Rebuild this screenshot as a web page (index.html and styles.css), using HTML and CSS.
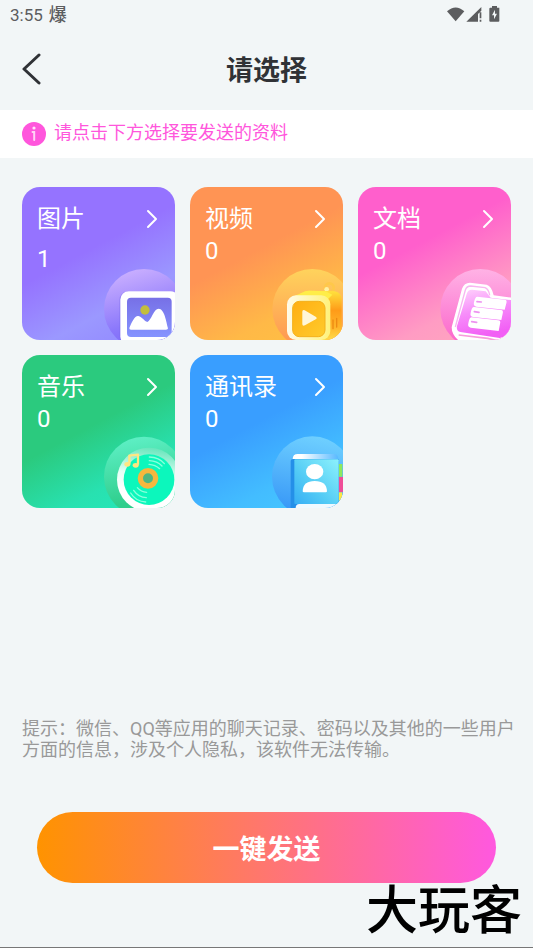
FILE: index.html
```html
<!DOCTYPE html>
<html lang="zh-CN">
<head>
  <meta charset="UTF-8" />
  <meta name="viewport" content="width=device-width, initial-scale=1.0" />
  <title>请选择</title>
  <link rel="stylesheet" href="styles.css">
</head>
<body>

  <div class="status">
    <span class="time">3:55</span>
    <span class="badge">爆</span>
    <svg class="status-icons" width="54" height="18" viewBox="0 0 162 54" fill="#5c5d5f">
      <path d="M0 16 Q26 -7 52 16 L26 46 Z" />
      <path d="M58 47 L103 3 V14 L93 24 V47 Z M98 19 H103 V37 H98 Z M98 41 H103 V47 H98 Z" />
      <path d="M130 5 H135 V0 H150 V5 H157 V45 Q157 47 154 47 H130 Q127 47 127 45 V8 Q127 5 130 5 Z" />
      <path d="M144 11 L135 28 H141 V40 L150 23 H144 Z" fill="#f2f6f7" />
    </svg>
  </div>

  <header class="header">
    <button class="back" aria-label="返回">
      <svg width="20" height="34" viewBox="0 0 20 34" fill="none" stroke="#303236" stroke-width="3" stroke-linecap="round" stroke-linejoin="round"><path d="M17 2 L2 16 L17 30" /></svg>
    </button>
    <h1>请选择</h1>
  </header>

  <div class="notice">
    <svg width="24" height="24" viewBox="0 0 24 24">
      <circle cx="12" cy="12" r="12" fill="#ff56dc" />
      <circle cx="12" cy="6" r="1.6" fill="#ffe3f9" />
      <path d="M10.5 10 H12.2 V18" fill="none" stroke="#ffd3f5" stroke-width="2" stroke-linecap="round" />
    </svg>
    <span>请点击下方选择要发送的资料</span>
  </div>

  <main class="cards">
    <button class="card image">
      <span class="card-head">图片 <svg class="arrow" viewBox="0 0 12 20"><path d="M2 2 L10 10 L2 18" /></svg></span>
      <span class="count">1</span>
      <svg class="art" viewBox="264 264 216 216">
        <defs>
          <linearGradient id="img-bg" x1="0.3" y1="0" x2="0.6" y2="1"><stop offset="0" stop-color="#cbb0ff" /><stop offset="0.65" stop-color="#8b78fb" /><stop offset="1" stop-color="#7566f5" /></linearGradient>
          <linearGradient id="img-in" x1="0" y1="0" x2="0" y2="1"><stop offset="0" stop-color="#7770e6" /><stop offset="1" stop-color="#8593ff" /></linearGradient>
        </defs>
        <circle cx="387" cy="387" r="120" fill="url(#img-bg)" />
        <rect x="313" y="333" width="180" height="160" rx="27" fill="#7566e8" opacity="0.4" />
        <rect x="316" y="334" width="176" height="160" rx="25" fill="#fff" />
        <rect x="336" y="353" width="134" height="118" rx="12" fill="url(#img-in)" />
        <circle cx="390" cy="390" r="14" fill="#c3be3c" />
        <path d="M343 444 C350 426 360 406 370 408 C382 411 388 424 397 426 C409 421 416 386 431 386 C448 386 454 425 459 445 Q459 449 453 449 H348 Q342 449 343 444 Z" fill="#fff" />
      </svg>
    </button>

    <button class="card video">
      <span class="card-head">视频 <svg class="arrow" viewBox="0 0 12 20"><path d="M2 2 L10 10 L2 18" /></svg></span>
      <span class="count">0</span>
      <svg class="art" viewBox="264 264 216 216">
        <defs>
          <linearGradient id="vid-bg" x1="0.4" y1="0" x2="0.4" y2="1"><stop offset="0" stop-color="#ffd35c" /><stop offset="1" stop-color="#ff9252" /></linearGradient>
          <linearGradient id="vid-side" x1="0" y1="0" x2="0" y2="1"><stop offset="0" stop-color="#ffe33e" /><stop offset="0.4" stop-color="#ff9b18" /><stop offset="0.75" stop-color="#ffb52a" /><stop offset="1" stop-color="#ffdc4c" /></linearGradient>
          <linearGradient id="vid-front" x1="0" y1="0" x2="1" y2="0"><stop offset="0" stop-color="#fffbea" /><stop offset="1" stop-color="#fff27a" /></linearGradient>
          <linearGradient id="vid-in" x1="0" y1="0" x2="1" y2="1"><stop offset="0" stop-color="#ffae12" /><stop offset="1" stop-color="#ffcb2c" /></linearGradient>
        </defs>
        <circle cx="388" cy="387" r="120" fill="url(#vid-bg)" />
        <circle cx="439" cy="323" r="13" fill="none" stroke="#ffc84a" stroke-width="8" />
        <circle cx="431" cy="328" r="7" fill="#fff1a3" />
        <path d="M335 349 L367 334 Q371 332 379 332 L455 334 Q476 337 476 361 V480 H400 Z" fill="url(#vid-side)" />
        <path d="M326 352 L367 334 Q371 332 379 332 L428 334 L448 344 L430 362 Z" fill="#ffed48" />
        <rect x="312" y="346" width="130" height="134" rx="27" fill="url(#vid-front)" />
        <rect x="329" y="364" width="97" height="106" rx="20" fill="url(#vid-in)" stroke="#f3b01c" stroke-width="3" />
        <path d="M358 395 Q358 388 365 391 L398 410 Q404 414 398 418 L366 436 Q358 440 358 432 Z" fill="#fff6d9" />
        <path d="M450 420 V446 M461 415 V441" stroke="#ed8a12" stroke-width="4" stroke-linecap="round" />
      </svg>
    </button>

    <button class="card document">
      <span class="card-head">文档 <svg class="arrow" viewBox="0 0 12 20"><path d="M2 2 L10 10 L2 18" /></svg></span>
      <span class="count">0</span>
      <svg class="art" viewBox="264 264 216 216">
        <defs>
          <linearGradient id="doc-bg" x1="0.4" y1="0" x2="0.4" y2="1"><stop offset="0" stop-color="#ffb2e5" /><stop offset="1" stop-color="#fb60c9" /></linearGradient>
          <linearGradient id="doc-in" x1="0" y1="0" x2="0.3" y2="1"><stop offset="0" stop-color="#ffd5fc" /><stop offset="0.5" stop-color="#f78dfa" /><stop offset="1" stop-color="#f25ff5" /></linearGradient>
        </defs>
        <circle cx="388" cy="387" r="120" fill="url(#doc-bg)" />
        <path d="M302 442 L333 326 Q339 308 357 308 L407 314 Q422 318 428 346 L490 354 V484 H326 Q302 466 302 442 Z" fill="#fff" />
        <path d="M313 441 L343 330 Q347 318 359 318 L402 323 Q413 327 416 346" fill="none" stroke="#f8b6f1" stroke-width="4" />
        <path d="M318 438 L347 342 Q350 329 363 329 L404 334 L419 353 L488 361 V462 L446 474 L328 456 Q315 452 318 438 Z" fill="url(#doc-in)" />
        <path d="M379 350 L461 359 Q469 360 466 370 L461 389 L376 380 Q366 378 369 367 Q372 350 379 350 Z" fill="#fff" />
        <path d="M369 381 L450 390 Q458 391 455 401 L451 420 L366 411 Q356 409 359 398 Q362 381 369 381 Z" fill="#fff" />
        <path d="M361 412 L442 421 Q450 422 447 432 L443 453 L359 443 Q349 441 352 430 Q355 412 361 412 Z" fill="#fff" />
        <path d="M378 365 L391 366 M370 395 L384 397 M362 425 L377 427" stroke="#ed92f0" stroke-width="5" stroke-linecap="round" />
        <path d="M323 465 L410 475 L438 482" fill="none" stroke="#f89bdc" stroke-width="5" />
      </svg>
    </button>

    <button class="card music">
      <span class="card-head">音乐 <svg class="arrow" viewBox="0 0 12 20"><path d="M2 2 L10 10 L2 18" /></svg></span>
      <span class="count">0</span>
      <svg class="art" viewBox="264 264 216 216">
        <defs>
          <linearGradient id="mus-bg" x1="0.3" y1="0" x2="0.5" y2="1"><stop offset="0" stop-color="#5ff0c6" /><stop offset="0.8" stop-color="#2fce8c" /></linearGradient>
          <linearGradient id="mus-ring" x1="0.5" y1="0" x2="0.4" y2="0.7"><stop offset="0" stop-color="#69e6bd" /><stop offset="0.6" stop-color="#e4fff5" /><stop offset="1" stop-color="#fff" /></linearGradient>
        </defs>
        <circle cx="387" cy="386" r="120" fill="url(#mus-bg)" />
        <circle cx="402" cy="395" r="96" fill="url(#mus-ring)" />
        <circle cx="402" cy="395" r="76" fill="#0cf7bc" />
        <circle cx="399" cy="391" r="23" fill="#4fb681" stroke="#f6b73e" stroke-width="16" />
        <g fill="none" stroke="#8affdc" stroke-width="4" stroke-linecap="round">
          <path d="M403 327 Q433 328 448 347 M403 338 Q427 339 441 354 M402 349 Q421 350 434 362" />
          <path d="M347 435 Q363 461 392 462 M356 427 Q370 448 394 449 M367 419 Q378 432 395 433" />
        </g>
        <path d="M343 348 V323 L369 320 V350" fill="none" stroke="#ffe682" stroke-width="7" stroke-linejoin="round" />
        <ellipse cx="337" cy="349" rx="9" ry="7" fill="#ffe682" />
        <ellipse cx="362" cy="352" rx="9" ry="7" fill="#ffe682" />
      </svg>
    </button>

    <button class="card contacts">
      <span class="card-head">通讯录 <svg class="arrow" viewBox="0 0 12 20"><path d="M2 2 L10 10 L2 18" /></svg></span>
      <span class="count">0</span>
      <svg class="art" viewBox="264 264 216 216">
        <defs>
          <linearGradient id="con-bg" x1="0.6" y1="0" x2="0.4" y2="1"><stop offset="0" stop-color="#6fd0ff" /><stop offset="1" stop-color="#3595f7" /></linearGradient>
          <linearGradient id="con-page" x1="0" y1="0" x2="1" y2="0"><stop offset="0.2" stop-color="#fff" /><stop offset="1" stop-color="#58b9ff" /></linearGradient>
          <linearGradient id="con-in" x1="1" y1="0" x2="0" y2="1"><stop offset="0" stop-color="#8cf1fc" /><stop offset="0.6" stop-color="#53cbf5" /><stop offset="1" stop-color="#36aef5" /></linearGradient>
        </defs>
        <circle cx="388" cy="386" r="121" fill="url(#con-bg)" />
        <path d="M329 334 Q329 318 344 318 H452 Q466 318 466 334 Z" fill="url(#con-page)" />
        <rect x="466" y="348" width="12" height="38" fill="#8ee95c" />
        <rect x="466" y="387" width="14" height="45" fill="#ef4d98" />
        <rect x="466" y="433" width="12" height="25" fill="#ffe642" />
        <path d="M323 340 Q323 333 332 333 H467 V468 H345 Q338 468 338 480 H323 Z" fill="#248fe8" />
        <rect x="334" y="334" width="133" height="134" rx="3" fill="url(#con-in)" />
        <path d="M338 480 Q338 468 350 468 H467 L481 456 V480 Z" fill="#eff9ff" />
        <ellipse cx="395" cy="371" rx="26" ry="23" fill="#fff" />
        <path d="M359 430 Q360 399 395 399 Q431 399 432 430 Q432 433 428 433 H363 Q359 433 359 430 Z" fill="#fff" />
      </svg>
    </button>
  </main>

  <footer class="footer">
    <p class="tip">提示：微信、QQ等应用的聊天记录、密码以及其他的一些用户方面的信息，涉及个人隐私，该软件无法传输。</p>
    <button class="send">一键发送</button>
  </footer>

  <div class="watermark">大玩客</div>

</body>
</html>
```
FILE: styles.css
```css
* { box-sizing: border-box; }
body { margin: 0; min-height: 100vh; display: flex; flex-direction: column; position: relative; background: #f2f6f7; border-bottom: 1px solid #777; font-family: Roboto, "Noto Sans CJK SC", sans-serif; color: #303236; }
button { padding: 0; border: none; background: none; font-family: inherit; color: inherit; cursor: pointer; }
svg { display: block; flex: none; }

.status { display: flex; align-items: center; height: 30px; padding: 0 32px 0 10px; font-size: 17px; line-height: 24px; color: #5c5d5f; }
.badge { margin-left: 6px; font-size: 18px; font-weight: 500; }
.status-icons { margin-left: auto; }

.header { display: grid; grid-template-columns: 20px 1fr 20px; align-items: center; height: 80px; padding: 0 22px; }
.header h1 { margin: 0; padding-top: 2px; font-size: 27px; line-height: 40px; text-align: center; }

.notice { display: flex; align-items: center; gap: 8px; height: 48px; padding: 0 22px; background: #fff; color: #ff56dc; font-size: 18px; line-height: 24px; }
.notice span { padding-bottom: 2px; }

.cards { display: grid; grid-template-columns: repeat(3, 1fr); gap: 15px; padding: 29px 22px; }
.card { position: relative; display: flex; flex-direction: column; aspect-ratio: 1; padding: 16px 15px; border-radius: 18px; overflow: hidden; color: #fff; font-size: 24px; text-align: left; }
.card-head { display: flex; align-items: center; justify-content: space-between; width: 100%; line-height: 32px; }
.arrow { width: 12px; height: 20px; margin-right: 2px; fill: none; stroke: #fff; stroke-width: 2; stroke-linecap: round; stroke-linejoin: round; }
.count { line-height: 32px; }
.art { position: absolute; right: 0; bottom: 0; width: 72px; height: 72px; }

.image { background: linear-gradient(152deg, #9573ff 0%, #9573ff 42%, #9b98ff 72%, #8f84ff 100%); }
.image .count { margin-top: 8px; }
.video { background: linear-gradient(152deg, #ff9454 0%, #ff9454 42%, #ffb947 75%, #ffc142 100%); }
.document { background: linear-gradient(152deg, #ff5fcc 0%, #ff5fcc 38%, #ff9cc3 75%, #ffa8bd 100%); }
.music { background: linear-gradient(152deg, #2bca7e 0%, #2bca7e 46%, #28e1b0 75%, #24e9bd 100%); }
.contacts { background: linear-gradient(152deg, #399eff 0%, #399eff 44%, #43bdff 75%, #46c9ff 100%); }

.footer { margin-top: auto; padding: 0 37px 64px; }
.tip { margin: 0 -23px 52px -15px; font-size: 18px; line-height: 21px; color: #999; }
.send { display: block; width: 100%; height: 71px; border-radius: 36px; background: linear-gradient(90deg, #ff9300, #ff7670 50%, #ff58df); color: #fff; font-size: 27px; font-weight: bold; }

.watermark { position: absolute; right: 11px; bottom: 2px; font-family: "Noto Sans CJK SC", sans-serif; font-size: 52px; line-height: 76px; font-weight: 500; color: #000; }
```
